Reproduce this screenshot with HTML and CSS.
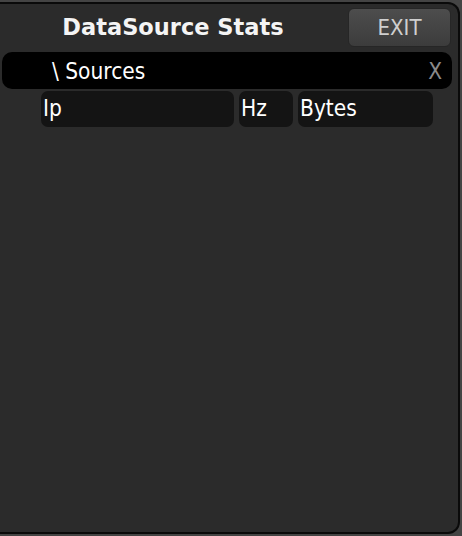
FILE: index.html
```html
<!DOCTYPE html>
<html>
<head>
<meta charset="utf-8">
<link rel="stylesheet" href="styles.css">
</head>
<body>
<div class="panel">
  <div class="titlebar">
    <div class="title">DataSource Stats</div>
    <button class="exit">EXIT</button>
  </div>
  <div class="sources">
    <span class="path">\ Sources</span>
    <span class="close">X</span>
  </div>
  <div class="header">
    <div class="cell ip">Ip</div>
    <div class="cell hz">Hz</div>
    <div class="cell bytes">Bytes</div>
  </div>
</div>
</body>
</html>
```

FILE: styles.css
```css
html, body {
  margin: 0;
  padding: 0;
  width: 462px;
  height: 536px;
  background: #444444;
  overflow: hidden;
}
body {
  padding-top: 2px;
  box-sizing: border-box;
}
.panel {
  width: 460px;
  height: 532px;
  box-sizing: border-box;
  background: #2b2b2b;
  border: 2px solid #0a0a0a;
  border-left: none;
  border-radius: 0 12px 12px 0;
  display: flex;
  flex-direction: column;
  font-family: "DejaVu Sans Condensed", "DejaVu Sans", sans-serif;
  color: #ffffff;
}
.titlebar {
  display: flex;
  align-items: center;
  height: 45px;
  padding-top: 1px;
  box-sizing: border-box;
}
.title {
  width: 346px;
  text-align: center;
  font-family: "DejaVu Sans", sans-serif;
  font-weight: bold;
  font-size: 22.5px;
  color: #f4f4f4;
}
.exit {
  width: 103px;
  height: 39px;
  margin-left: 2px;
  border: 1px solid #262626;
  border-radius: 6px;
  background: linear-gradient(#4d4d4d, #3c3c3c);
  color: #cfcfcf;
  font-family: "DejaVu Sans Condensed", sans-serif;
  font-size: 22px;
  padding: 0;
}
.sources {
  margin: 3px 0 0 2px;
  width: 450px;
  height: 37px;
  background: #000000;
  border-radius: 10px;
  display: flex;
  align-items: center;
  justify-content: space-between;
  font-size: 22.5px;
}
.path {
  margin-left: 50px;
  color: #ffffff;
}
.close {
  margin-right: 10px;
  color: #8a8a8a;
}
.header {
  display: flex;
  gap: 5px;
  margin: 2px 0 0 41px;
  height: 36px;
}
.cell {
  background: #141414;
  border-radius: 7px;
  font-size: 22.5px;
  line-height: 34px;
  padding-left: 2px;
  box-sizing: border-box;
  color: #ffffff;
}
.ip { width: 193px; }
.hz { width: 54px; }
.bytes { width: 135px; }
```
